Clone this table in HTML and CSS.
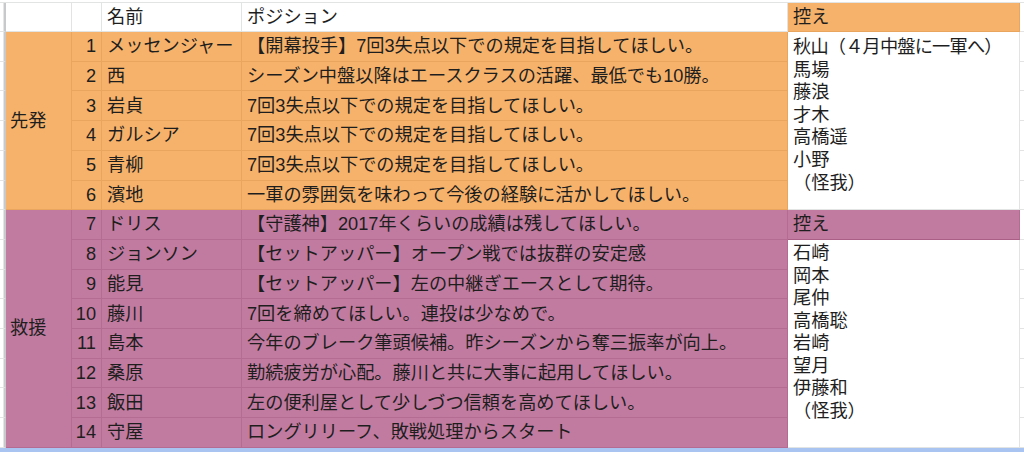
FILE: index.html
```html
<!DOCTYPE html>
<html lang="ja">
<head>
<meta charset="utf-8">
<title>投手起用</title>
<link rel="stylesheet" href="styles.css">
</head>
<body>
<div class="sheet">
  <div class="top-strip"></div>

  <div class="edge"></div>
  <div class="cell"></div>
  <div class="cell"></div>
  <div class="cell">名前</div>
  <div class="cell">ポジション</div>
  <div class="cell orange">控え</div>
  <div class="edge-r"></div>

  <div class="edge"></div>
  <div class="cell orange group start">先発</div>
  <div class="cell orange num">1</div>
  <div class="cell orange">メッセンジャー</div>
  <div class="cell orange">【開幕投手】7回3失点以下での規定を目指してほしい。</div>
  <div class="cell list list-a"><span class="tight">秋山（４月中盤に一軍へ）</span><br>馬場<br>藤浪<br>才木<br>高橋遥<br>小野<br>（怪我）</div>
  <div class="edge-r"></div>

  <div class="edge"></div>
  <div class="cell orange num">2</div>
  <div class="cell orange">西</div>
  <div class="cell orange">シーズン中盤以降はエースクラスの活躍、最低でも10勝。</div>
  <div class="edge-r"></div>

  <div class="edge"></div>
  <div class="cell orange num">3</div>
  <div class="cell orange">岩貞</div>
  <div class="cell orange">7回3失点以下での規定を目指してほしい。</div>
  <div class="edge-r"></div>

  <div class="edge"></div>
  <div class="cell orange num">4</div>
  <div class="cell orange">ガルシア</div>
  <div class="cell orange">7回3失点以下での規定を目指してほしい。</div>
  <div class="edge-r"></div>

  <div class="edge"></div>
  <div class="cell orange num">5</div>
  <div class="cell orange">青柳</div>
  <div class="cell orange">7回3失点以下での規定を目指してほしい。</div>
  <div class="edge-r"></div>

  <div class="edge"></div>
  <div class="cell orange num">6</div>
  <div class="cell orange">濱地</div>
  <div class="cell orange">一軍の雰囲気を味わって今後の経験に活かしてほしい。</div>
  <div class="edge-r"></div>

  <div class="edge"></div>
  <div class="cell purple group relief">救援</div>
  <div class="cell purple num">7</div>
  <div class="cell purple">ドリス</div>
  <div class="cell purple">【守護神】2017年くらいの成績は残してほしい。</div>
  <div class="cell purple sub-head">控え</div>
  <div class="edge-r"></div>

  <div class="edge"></div>
  <div class="cell purple num">8</div>
  <div class="cell purple">ジョンソン</div>
  <div class="cell purple">【セットアッパー】オープン戦では抜群の安定感</div>
  <div class="cell list list-b">石崎<br>岡本<br>尾仲<br>高橋聡<br>岩崎<br>望月<br>伊藤和<br>（怪我）</div>
  <div class="edge-r"></div>

  <div class="edge"></div>
  <div class="cell purple num">9</div>
  <div class="cell purple">能見</div>
  <div class="cell purple">【セットアッパー】左の中継ぎエースとして期待。</div>
  <div class="edge-r"></div>

  <div class="edge"></div>
  <div class="cell purple num">10</div>
  <div class="cell purple">藤川</div>
  <div class="cell purple">7回を締めてほしい。連投は少なめで。</div>
  <div class="edge-r"></div>

  <div class="edge"></div>
  <div class="cell purple num">11</div>
  <div class="cell purple">島本</div>
  <div class="cell purple">今年のブレーク筆頭候補。昨シーズンから奪三振率が向上。</div>
  <div class="edge-r"></div>

  <div class="edge"></div>
  <div class="cell purple num">12</div>
  <div class="cell purple">桑原</div>
  <div class="cell purple">勤続疲労が心配。藤川と共に大事に起用してほしい。</div>
  <div class="edge-r"></div>

  <div class="edge"></div>
  <div class="cell purple num">13</div>
  <div class="cell purple">飯田</div>
  <div class="cell purple">左の便利屋として少しづつ信頼を高めてほしい。</div>
  <div class="edge-r"></div>

  <div class="edge"></div>
  <div class="cell purple num">14</div>
  <div class="cell purple">守屋</div>
  <div class="cell purple">ロングリリーフ、敗戦処理からスタート</div>
  <div class="edge-r"></div>

  <div class="selection"></div>
</div>
</body>
</html>
```

FILE: styles.css
```css
html, body {
  margin: 0;
  padding: 0;
  background: #ffffff;
}

body {
  width: 1024px;
  height: 452px;
  overflow: hidden;
  font-family: "Liberation Sans", "Noto Sans CJK JP", sans-serif;
  font-size: 18.2px;
  color: #1e1e1e;
}

.sheet {
  display: grid;
  grid-template-columns: 6px 66px 30px 140px 546px 232px 4px;
  grid-template-rows: 3px 29px repeat(14, 29.714px) 4px;
}

.top-strip {
  grid-column: 1 / -1;
  border-bottom: 1px solid #e2e3e3;
  box-sizing: border-box;
}

.edge {
  box-sizing: border-box;
  border-bottom: 1px solid #e2e3e3;
  border-right: 2px solid #c7c9cb;
  box-shadow: inset -1px 0 0 #e6e6e6;
}

.edge-r {
  box-sizing: border-box;
  border-bottom: 1px solid #e2e3e3;
}

.cell {
  box-sizing: border-box;
  display: flex;
  align-items: center;
  padding: 0 5px;
  white-space: nowrap;
  overflow: hidden;
  border-right: 1px solid #e2e3e3;
  border-bottom: 1px solid #e2e3e3;
  line-height: 1;
}

.orange {
  background: #f6b26b;
  border-color: rgba(150, 80, 0, 0.13);
}

.purple {
  background: #c27ba0;
  border-color: rgba(90, 0, 50, 0.12);
}

.num {
  justify-content: flex-end;
}

.group {
  padding-left: 4px;
}

.start {
  grid-row: span 6;
}

.relief {
  grid-row: span 8;
}

.list {
  display: block;
  background: #ffffff;
  line-height: 22.6px;
  padding: 4px 5px 0;
}

.tight {
  letter-spacing: -0.8px;
}

.list-a {
  grid-row: span 6;
  padding-top: 4px;
}

.list-b {
  grid-row: span 7;
  padding-top: 2px;
}

.sub-head {
  border-bottom-color: rgba(90, 0, 50, 0.22);
}

.selection {
  grid-column: 1 / -1;
  background: #a9c4f0;
}
```
